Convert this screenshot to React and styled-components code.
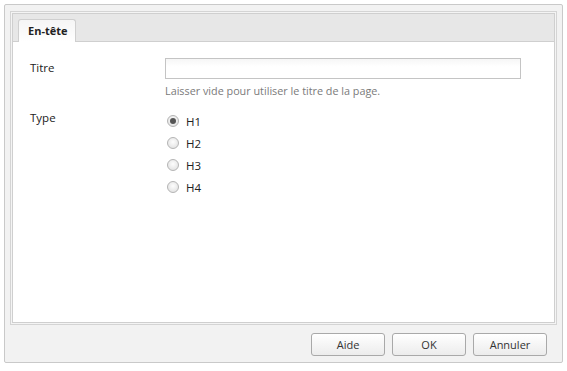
import React, { useState } from "react";
import styled, { createGlobalStyle } from "styled-components";

const Global = createGlobalStyle`
  html, body {
    margin: 0;
    padding: 0;
    background: #ffffff;
  }
  body {
    font-family: "Open Sans", "DejaVu Sans", sans-serif;
    font-size: 11px;
    color: #222;
  }
`;

const Dialog = styled.div`
  margin: 4px;
  width: 559px;
  height: 359px;
  box-sizing: border-box;
  border: 1px solid #c9c9c9;
  border-radius: 2px;
  background: #f2f2f2;
  padding: 6px 5px 0 5px;
  display: flex;
  flex-direction: column;
`;

const Panel = styled.div`
  height: 314px;
  box-sizing: border-box;
  border: 1px solid #d4d4d4;
  padding: 1px;
  background: #f4f4f4;
  display: flex;
  flex-direction: column;
`;

const PanelInner = styled.div`
  flex: 1;
  border: 1px solid #cfcfcf;
  display: flex;
  flex-direction: column;
  background: #ffffff;
`;

const TabStrip = styled.div`
  height: 27px;
  background: #e7e7e7;
  border-bottom: 1px solid #cfcfcf;
  display: flex;
  align-items: flex-end;
  padding-left: 5px;
`;

const Tab = styled.div`
  height: 22px;
  margin-bottom: -1px;
  padding: 0 8px 0 9px;
  border: 1px solid #cfcfcf;
  border-bottom: none;
  border-radius: 3px 3px 0 0;
  background: linear-gradient(#f5f5f5, #ffffff);
  font-weight: bold;
  font-size: 11px;
  line-height: 22px;
  color: #222;
`;

const Form = styled.div`
  flex: 1;
  padding: 16px 0 0 17px;
`;

const Row = styled.div`
  display: flex;
  margin-bottom: ${(p) => p.$gap || 0}px;
`;

const Label = styled.div`
  width: 135px;
  flex-shrink: 0;
  font-size: 11.5px;
  line-height: 20px;
  color: #222;
`;

const Field = styled.div`
  display: flex;
  flex-direction: column;
`;

const TextInput = styled.input`
  width: 356px;
  height: 21px;
  box-sizing: border-box;
  border: 1px solid #c4c4c4;
  background: linear-gradient(#f6f6f6, #ffffff 40%);
  margin: 0;
  outline: none;
`;

const Help = styled.div`
  margin-top: 5px;
  color: #7a7a7a;
  font-size: 10.8px;
  line-height: 14px;
`;

const Radios = styled.div`
  display: flex;
  flex-direction: column;
  padding-top: 2px;
`;

const RadioRow = styled.label`
  display: flex;
  align-items: center;
  height: 22px;
  gap: 7px;
  padding-left: 2px;
  font-size: 11.5px;
  color: #222;
  cursor: pointer;
`;

const Dot = styled.span`
  width: 12px;
  height: 12px;
  box-sizing: border-box;
  border-radius: 50%;
  border: 1px solid #b4b4b4;
  background: radial-gradient(circle at 50% 40%, #fdfdfd, #dcdcdc);
  display: flex;
  align-items: center;
  justify-content: center;

  &::after {
    content: "";
    width: 6px;
    height: 6px;
    border-radius: 50%;
    background: ${(p) => (p.$on ? "#555" : "transparent")};
  }
`;

const Footer = styled.div`
  flex: 1;
  display: flex;
  justify-content: flex-end;
  align-items: center;
  gap: 7px;
  padding-right: 10px;
  padding-top: 1px;
`;

const Button = styled.button`
  width: 74px;
  height: 23px;
  box-sizing: border-box;
  border: 1px solid #a9a9a9;
  border-radius: 3px;
  background: linear-gradient(#ffffff, #ececec);
  font-family: inherit;
  font-size: 11px;
  color: #333;
  padding: 0;
  cursor: pointer;
`;

export default function App() {
  const [type, setType] = useState("H1");
  const [title, setTitle] = useState("");

  return (
    <>
      <Global />
      <Dialog>
        <Panel>
          <PanelInner>
            <TabStrip>
              <Tab>En-tête</Tab>
            </TabStrip>
            <Form>
              <Row $gap={10}>
                <Label>Titre</Label>
                <Field>
                  <TextInput value={title} onChange={(e) => setTitle(e.target.value)} />
                  <Help>Laisser vide pour utiliser le titre de la page.</Help>
                </Field>
              </Row>
              <Row>
                <Label>Type</Label>
                <Radios>
                  {["H1", "H2", "H3", "H4"].map((h) => (
                    <RadioRow key={h} onClick={() => setType(h)}>
                      <Dot $on={type === h} />
                      {h}
                    </RadioRow>
                  ))}
                </Radios>
              </Row>
            </Form>
          </PanelInner>
        </Panel>
        <Footer>
          <Button>Aide</Button>
          <Button>OK</Button>
          <Button>Annuler</Button>
        </Footer>
      </Dialog>
    </>
  );
}
